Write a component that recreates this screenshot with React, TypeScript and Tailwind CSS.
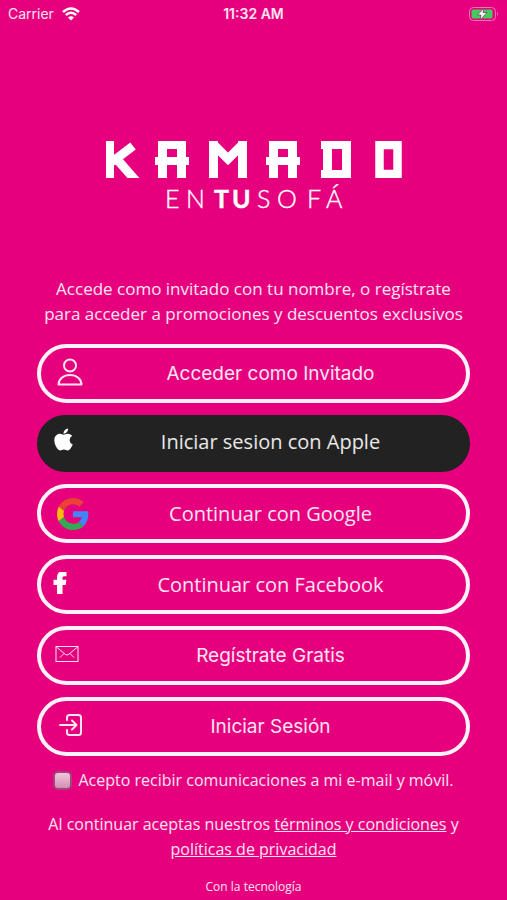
import type { ReactNode } from 'react';
import { FaApple, FaFacebookF } from 'react-icons/fa';

/**
 * Login landing screen. Guests can enter with just a name; everyone else
 * picks a social provider, signs up or signs in.
 */
export default function App() {
  return (
    <div className="flex min-h-screen flex-col bg-[#e6007e] font-['Open_Sans',sans-serif] text-white/90">
      <StatusBar />

      <main className="flex flex-col items-center px-[37px] pt-28">
        <Logo />

        <p className="mt-[62px] w-full text-center text-[17px] leading-[25px]">
          Accede como invitado con tu nombre, o regístrate para acceder a promociones y descuentos
          exclusivos
        </p>

        <div className="mt-[18px] flex w-full flex-col gap-3">
          <LoginButton icon={<PersonIcon />} iconClass="pl-4 pb-1" system>
            Acceder como Invitado
          </LoginButton>
          <LoginButton icon={<FaApple className="size-[25px] text-white" />} iconClass="pl-2.5 pb-1" dark>
            Iniciar sesion con Apple
          </LoginButton>
          <LoginButton icon={<GoogleIcon />} iconClass="pl-4">
            Continuar con Google
          </LoginButton>
          <LoginButton
            icon={<FaFacebookF className="size-[22px] stroke-white stroke-[28px] text-white" />}
            iconClass="pl-2 pb-1"
          >
            Continuar con Facebook
          </LoginButton>
          <LoginButton icon={<MailIcon />} iconClass="pl-3.5 pb-1" system>
            Regístrate Gratis
          </LoginButton>
          <LoginButton icon={<EnterIcon />} iconClass="pl-[18px] pb-1" system>
            Iniciar Sesión
          </LoginButton>
        </div>

        <label className="mt-3 flex items-center gap-1.5 text-base leading-6">
          <input
            type="checkbox"
            className="size-[19px] appearance-none rounded-[5px] border-2 border-[#a0457c] bg-linear-to-b from-[#f0c8dc] to-[#d58db4] checked:from-white checked:to-white"
          />
          Acepto recibir comunicaciones a mi e-mail y móvil.
        </label>

        <p className="mt-5 w-full text-center text-base leading-[25px]">
          Al continuar aceptas nuestros{' '}
          <a href="#terminos" className="underline">
            términos y condiciones
          </a>{' '}
          y{' '}
          <a href="#privacidad" className="underline">
            políticas de privacidad
          </a>
        </p>

        <p className="mt-[15px] text-xs leading-5">Con la tecnología</p>
      </main>
    </div>
  );
}

function StatusBar() {
  return (
    <header className="grid h-7 grid-cols-3 items-center px-2 font-['Inter',sans-serif] text-sm">
      <div className="flex items-center gap-2">
        Carrier
        <WifiIcon />
      </div>
      <div className="text-center font-semibold">11:32 AM</div>
      <div className="flex justify-end">
        <BatteryIcon />
      </div>
    </header>
  );
}

interface LoginButtonProps {
  icon: ReactNode;
  iconClass: string;
  dark?: boolean;
  system?: boolean;
  children: ReactNode;
}

function LoginButton({ icon, iconClass, dark, system, children }: LoginButtonProps) {
  const skin = dark ? 'h-[57px] border-[#222222] bg-[#222222] pb-1' : 'h-[59px] border-white/95';
  const font = system ? "font-['Inter',sans-serif] text-[19px]" : 'text-xl';

  return (
    <button
      type="button"
      className={`flex w-full cursor-pointer items-center rounded-full border-4 ${skin}`}
    >
      <span className={`flex w-[60px] shrink-0 items-center ${iconClass}`}>{icon}</span>
      <span className={`grow pr-[26px] text-center leading-7 ${font}`}>{children}</span>
    </button>
  );
}

function Logo() {
  return (
    <svg viewBox="0 0 300 74" className="w-[300px]" fill="#fff" role="img" aria-label="Kamado en tu sofá">
      <svg y="1" width="300" height="37" viewBox="0 0 300 37">
        <rect x="2" y="0" width="8" height="37" />
        <g fill="none" stroke="#fff" strokeWidth="9">
          <line x1="8" y1="21" x2="29" y2="5" />
          <line x1="11" y1="16" x2="32" y2="40" />
          <polyline points="109,3 124,18 139,3" />
        </g>
        <LogoArch x={51} />
        <rect x="105" y="0" width="9" height="37" />
        <rect x="134" y="0" width="9" height="37" />
        <LogoArch x={162} />
        <rect x="217" y="0" width="30" height="8" />
        <rect x="217" y="29" width="30" height="8" />
        <rect x="219" y="0" width="9" height="37" />
        <rect x="238" y="0" width="9" height="37" />
        <rect x="275.500" y="4" width="18" height="29" fill="none" stroke="#fff" strokeWidth="8.500" />
      </svg>
      <text y="68" fontFamily="Lato, sans-serif" fontSize="25" fontWeight="300" stroke="#fff" strokeWidth="0.400">
        <tspan x="61 82">EN</tspan>
        <tspan x="110 128" fontWeight="700">
          TU
        </tspan>
        <tspan x="153 173 203 222">SOFÁ</tspan>
      </text>
    </svg>
  );
}

function LogoArch({ x }: { x: number }) {
  return (
    <g transform={`translate(${x} 0)`}>
      <rect x="3" y="0" width="28" height="8" />
      <rect x="3" y="0" width="9" height="37" />
      <rect x="22" y="0" width="9" height="37" />
      <rect x="0" y="16" width="34" height="8" />
    </g>
  );
}

function PersonIcon() {
  return (
    <svg viewBox="0 0 26 28" className="h-7 w-[26px]" fill="none" stroke="currentColor" strokeWidth="2">
      <circle cx="13" cy="7.5" r="6" />
      <path d="M1.5 26.5c0-5.500 5-9.500 11.500-9.500s11.500 4 11.500 9.500z" strokeLinejoin="round" />
    </svg>
  );
}

function GoogleIcon() {
  return (
    <svg viewBox="0 0 48 48" className="size-8">
      <path fill="#EA4335" d="M24 9.500c3.540 0 6.710 1.220 9.210 3.600l6.850-6.850C35.900 2.380 30.470 0 24 0 14.620 0 6.510 5.380 2.560 13.220l7.980 6.190C12.430 13.720 17.740 9.500 24 9.500z" />
      <path fill="#4285F4" d="M46.980 24.550c0-1.570-.15-3.090-.38-4.550H24v9.020h12.940c-.58 2.960-2.260 5.480-4.780 7.180l7.730 6c4.510-4.180 7.090-10.360 7.090-17.650z" />
      <path fill="#FBBC05" d="M10.530 28.590c-.48-1.450-.76-2.990-.76-4.590s.27-3.140.76-4.590l-7.980-6.190C.92 16.460 0 20.120 0 24s.92 7.540 2.560 10.780l7.970-6.190z" />
      <path fill="#34A853" d="M24 48c6.480 0 11.930-2.130 15.890-5.810l-7.730-6c-2.150 1.450-4.920 2.300-8.160 2.300-6.260 0-11.570-4.220-13.470-9.910l-7.980 6.190C6.510 42.620 14.620 48 24 48z" />
    </svg>
  );
}

function MailIcon() {
  return (
    <svg viewBox="0 0 24 16" className="h-4 w-6" fill="none" stroke="currentColor">
      <rect x="1" y="0.500" width="22" height="15" />
      <path d="M1.500 1l9 7.500q1.500 1 3 0l9-7.500M5 11.500l4-4M19 11.500l-4-4" />
    </svg>
  );
}

function EnterIcon() {
  return (
    <svg
      viewBox="0 0 24 24"
      className="size-6"
      fill="none"
      stroke="currentColor"
      strokeWidth="2"
      strokeLinecap="round"
      strokeLinejoin="round"
    >
      <path d="M8 7V4.500Q8 2 10.500 2h9Q22 2 22 4.500v15q0 2.500-2.500 2.500h-9Q8 22 8 19.500V17M1 12h16M13 7.500l4.500 4.500-4.500 4.500" />
    </svg>
  );
}

function WifiIcon() {
  return (
    <svg viewBox="0 0 18 14" className="h-3.5 w-[18px]" fill="none" stroke="#fff" strokeWidth="2.400">
      <path d="M1 5q8-7 16 0M3.800 8q5.200-4.500 10.400 0" />
      <path d="M9 13.500l-3-3q3-2.400 6 0z" fill="#fff" stroke="none" />
    </svg>
  );
}

function BatteryIcon() {
  return (
    <svg viewBox="0 0 30 14" className="h-3.5 w-[30px]">
      <rect x="0.500" y="0.500" width="26" height="13" rx="4" fill="none" stroke="#f173b6" />
      <path d="M28 5q2 2 0 4z" fill="#f173b6" />
      <rect x="2.500" y="2.500" width="21" height="9" rx="2" fill="#3fce5c" />
      <path d="M15 1L8.500 8H12l-1 5 7-7.500h-4z" fill="#fff" stroke="#7d3d62" strokeWidth="0.800" />
    </svg>
  );
}
